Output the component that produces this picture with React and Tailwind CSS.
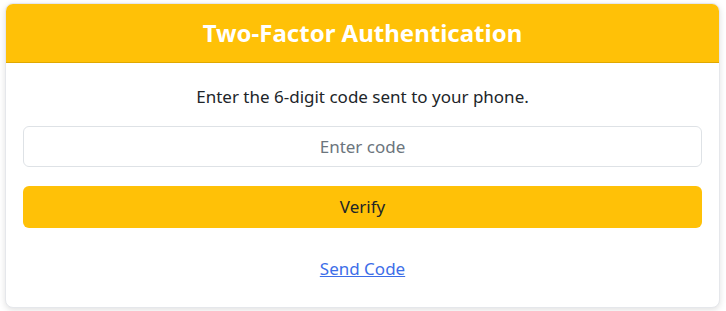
const font = { fontFamily: '"Noto Sans", "Open Sans", sans-serif' };

export default function App() {
  return (
    <div className="min-h-screen bg-white pl-[5px] pr-[6px] pt-[3px]" style={font}>
      <div className="overflow-hidden rounded-lg border border-gray-200 bg-white shadow-[0_2px_6px_rgba(0,0,0,0.12)]">
        <div className="flex h-[59px] items-center justify-center border-b border-[#e0a800] bg-[#ffc107]">
          <h3 className="text-[24px] font-bold leading-none text-white">Two-Factor Authentication</h3>
        </div>
        <div className="px-[17px] pb-[26px] pt-[22px]">
          <p className="text-center text-[17px] leading-6 text-[#212529]">
            Enter the 6-digit code sent to your phone.
          </p>
          <input
            type="text"
            placeholder="Enter code"
            className="mt-[17px] h-[41px] w-full rounded-md border border-[#dee2e6] px-3 text-center text-[17px] text-[#212529] placeholder-[#6c757d] outline-none"
          />
          <button
            type="button"
            className="mt-[19px] h-[42px] w-full rounded-md bg-[#ffc107] text-[17px] text-[#212529]"
          >
            Verify
          </button>
          <div className="mt-[29px] text-center leading-6">
            <a href="#" className="text-[17px] text-[#3d6ee8] underline">
              Send Code
            </a>
          </div>
        </div>
      </div>
    </div>
  );
}
